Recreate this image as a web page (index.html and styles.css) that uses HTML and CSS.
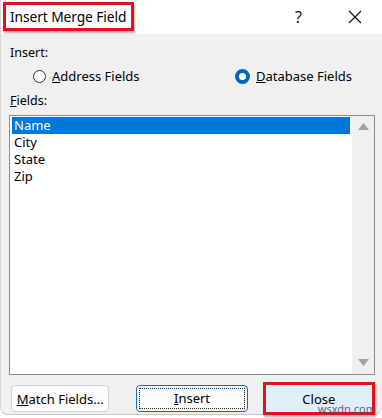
FILE: index.html
```html
<!DOCTYPE html>
<html>
<head>
<meta charset="utf-8">
<link rel="stylesheet" href="styles.css">
</head>
<body>
<div class="dialog">
  <div class="titlebar">
    <div class="title">Insert Merge Field</div>
    <div class="tb-buttons">
      <span class="help">?</span>
      <svg class="close-x" width="14" height="14" viewBox="0 0 14 14"><path d="M1 1 L13 13 M13 1 L1 13" stroke="#111" stroke-width="1.2" fill="none"/></svg>
    </div>
  </div>
  <div class="body">
    <div class="label">Insert:</div>
    <div class="radios">
      <label class="radio"><span class="circle"></span><span><u>A</u>ddress Fields</span></label>
      <label class="radio"><span class="circle checked"></span><span><u>D</u>atabase Fields</span></label>
    </div>
    <div class="label fields-label"><u>F</u>ields:</div>
    <div class="listbox">
      <div class="items">
        <div class="item selected">Name</div>
        <div class="item">City</div>
        <div class="item">State</div>
        <div class="item">Zip</div>
      </div>
      <div class="scrollbar">
        <svg width="11" height="7" viewBox="0 0 11 7"><path d="M0 7 L5.5 0 L11 7 Z" fill="#a3a3a3"/></svg>
        <svg width="11" height="7" viewBox="0 0 11 7"><path d="M0 0 L5.5 7 L11 0 Z" fill="#a3a3a3"/></svg>
      </div>
    </div>
    <div class="buttons">
      <button class="btn match"><u>M</u>atch Fields...</button>
      <button class="btn insert"><span class="focus"><u>I</u>nsert</span></button>
      <button class="btn closebtn">Close</button>
    </div>
  </div>
  <div class="watermark">wsxdn.com</div>
</div>
</body>
</html>
```
FILE: styles.css
```css
html, body {
  margin: 0;
  padding: 0;
  background: #ffffff;
}
body {
  width: 382px;
  height: 418px;
  overflow: hidden;
  font-family: "Noto Sans", "Open Sans", sans-serif;
  font-size: 12.5px;
  color: #000;
}
.dialog {
  position: relative;
  width: 382px;
  height: 415px;
  background: #f0f0f0;
  border-radius: 0 0 8px 8px;
  box-sizing: border-box;
  border-bottom: 1px solid #c8c8c8;
  border-left: 1px solid #d8d8d8;
}
.titlebar {
  height: 34px;
  background: #fff;
  display: flex;
  align-items: center;
  justify-content: space-between;
  padding: 0 0 0 2px;
}
.title {
  font-size: 13.8px;
  letter-spacing: -0.1px;
  line-height: 23px;
  padding: 0 5px 0 4px;
  border: 3px solid #e3101e;
  box-shadow: 1px 2px 2px rgba(0,0,0,0.35);
  margin-top: -1px;
}
.tb-buttons {
  display: flex;
  align-items: center;
  gap: 46px;
  padding-right: 20px;
}
.help {
  font-size: 16px;
  color: #111;
}
.body {
  padding: 10px 7px 0 8px;
}
.label {
  padding-left: 1px;
  line-height: 17px;
}
.radios {
  display: flex;
  padding-left: 24px;
  margin-top: 5px;
  height: 20px;
  align-items: center;
}
.radio {
  display: flex;
  align-items: center;
  gap: 6px;
  font-size: 13px;
}
.radio:first-child {
  width: 202px;
}
.circle {
  width: 13px;
  height: 13px;
  border: 1px solid #333;
  border-radius: 50%;
  background: #fff;
  box-sizing: border-box;
}
.circle.checked {
  border: 4px solid #0067c0;
  width: 15px;
  height: 15px;
}
.fields-label {
  margin-top: 6px;
}
.listbox {
  margin-top: 6px;
  height: 258px;
  border: 1px solid #8b8b8b;
  background: #fff;
  display: flex;
}
.items {
  flex: 1;
  padding: 1px 2px;
}
.item {
  height: 17px;
  line-height: 17px;
  padding-left: 2px;
  font-size: 13px;
}
.item.selected {
  background: #0078d7;
  color: #fff;
}
.scrollbar {
  width: 22px;
  background: #f0f0f0;
  display: flex;
  flex-direction: column;
  justify-content: space-between;
  align-items: center;
  padding: 7px 0 8px;
  box-sizing: border-box;
}
.buttons {
  display: flex;
  margin-top: 10px;
  padding-left: 2px;
}
.btn {
  font-family: inherit;
  font-size: 13px;
  height: 27px;
  border: 1px solid #d0d0d0;
  border-radius: 4px;
  background: #fbfbfb;
  color: #000;
  padding: 0;
}
.match {
  width: 99px;
}
.insert {
  width: 112px;
  margin-left: 27px;
  border: 1px solid #1b6fb8;
  padding: 2px;
}
.focus {
  display: block;
  height: 100%;
  border: 1px dotted #222;
  box-sizing: border-box;
  line-height: 19px;
}
.closebtn {
  width: 113px;
  margin-left: 15px;
  background: #e0eefa;
  border: 3px solid #e3101e;
  box-shadow: 1px 2px 2px rgba(0,0,0,0.35);
  height: 33px;
  margin-top: -3px;
  border-radius: 0;
}
.watermark {
  position: absolute;
  right: 6px;
  bottom: -2px;
  font-size: 11px;
  color: #3a4a5a;
  opacity: 0.8;
}
```
